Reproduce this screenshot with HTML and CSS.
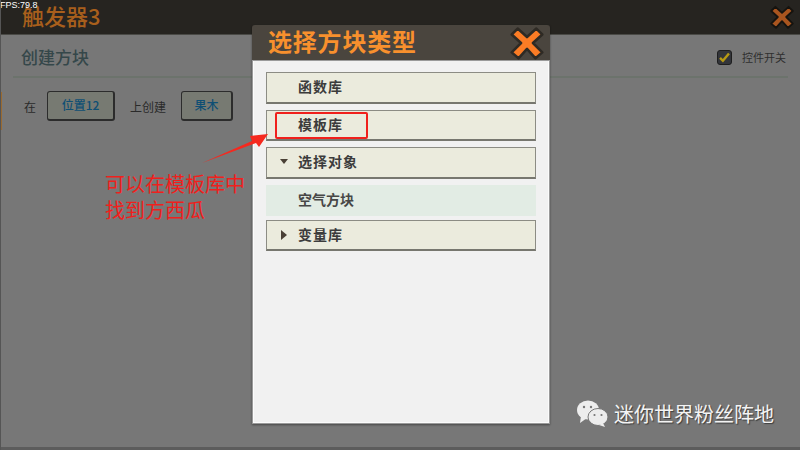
FILE: index.html
```html
<!DOCTYPE html>
<html lang="en">
<head>
  <meta charset="UTF-8" />
  <title>触发器3</title>
  <link rel="stylesheet" href="styles.css">
</head>
<body>

  <div class="screen">
    <div class="edge"></div>
    <div class="fps">FPS:79.8</div>

    <header class="topbar">
      <h1>触发器3</h1>
      <svg class="close close-dim" viewBox="0 0 40 40">
        <path d="M9 3 20 13 31 3 38 10 27 20 38 31 30 38 20 27 10 38 2 31 13 20 2 10z"/>
      </svg>
    </header>

    <main class="panel">
      <div class="panel-head">
        <h2>创建方块</h2>
        <div class="switch">
          <span class="checkbox">
            <svg viewBox="0 0 16 16"><path d="M2.5 8.5 6 12 13.5 3"/></svg>
          </span>
          <span>控件开关</span>
        </div>
      </div>
      <div class="create-row">
        <span>在</span>
        <button class="pick pick-pos">位置12</button>
        <span class="after">上创建</span>
        <button class="pick pick-tree">果木</button>
      </div>
    </main>

    <div class="footer-line"></div>

    <section class="modal">
      <div class="modal-head">
        <h2>选择方块类型</h2>
        <svg class="close" viewBox="0 0 40 40">
          <path d="M9 3 20 13 31 3 38 10 27 20 38 31 30 38 20 27 10 38 2 31 13 20 2 10z"/>
        </svg>
      </div>
      <div class="modal-body">
        <div class="item">函数库</div>
        <div class="item">模板库</div>
        <div class="item"><i class="arrow arrow-down"></i>选择对象</div>
        <div class="sub-item">空气方块</div>
        <div class="item"><i class="arrow arrow-right"></i>变量库</div>
      </div>
    </section>

    <!-- annotation drawn on top of the screenshot -->
    <div class="mark"></div>
    <svg class="pointer" viewBox="0 0 70 50">
      <path d="M0 30 50 8 48 3 66 1 57 14 54 10z"/>
    </svg>
    <div class="note">可以在模板库中<br>找到方西瓜</div>

    <div class="watermark">
      <svg viewBox="0 0 32 28">
        <ellipse cx="12" cy="10" rx="11" ry="9.5"/>
        <path d="M5 16 4 23 11 18z"/>
        <ellipse cx="22" cy="17" rx="10" ry="8.5" class="front"/>
        <path d="M27 23 29 27 23 25z"/>
        <circle cx="8" cy="7" r="1.2" class="eye"/>
        <circle cx="15" cy="7" r="1.2" class="eye"/>
        <circle cx="18.500" cy="15" r="1.1" class="eye"/>
        <circle cx="25.500" cy="15" r="1.1" class="eye"/>
      </svg>
      <span>迷你世界粉丝阵地</span>
    </div>
  </div>

</body>
</html>
```

FILE: styles.css
```css
* {
  box-sizing: border-box;
}

body {
  margin: 0;
  background: #777777;
  font-family: "Noto Sans CJK SC", "Liberation Sans", sans-serif;
}

h1, h2 {
  margin: 0;
}

.screen {
  position: relative;
  width: 800px;
  height: 450px;
  overflow: hidden;
  display: flex;
  flex-direction: column;
  background: #777777;
  border-left: 1px solid #555;
}

.edge {
  position: absolute;
  top: 92px;
  left: -1px;
  width: 2px;
  height: 38px;
  background: #9a6a30;
}

.fps {
  position: absolute;
  top: 0;
  left: -1px;
  font: 9px/10px "Liberation Sans", sans-serif;
  color: #fff;
}

.topbar {
  height: 35px;
  flex: none;
  display: flex;
  align-items: center;
  justify-content: space-between;
  padding: 0 6px 0 21px;
  background: #262420;
  border-bottom: 1px solid #4a4a46;
}

.topbar h1 {
  font-size: 22px;
  font-weight: 500;
  line-height: 31px;
  padding-bottom: 3px;
  color: #a85f1c;
}

.close {
  width: 34px;
  height: 34px;
  fill: #fb7c25;
  stroke: #2e2a24;
  stroke-width: 3;
  stroke-linejoin: round;
}

.close-dim {
  width: 24px;
  height: 24px;
  fill: #a9551f;
  stroke: #15130f;
}

.panel {
  flex: 1;
  padding: 0 12px;
}

.panel-head {
  height: 43px;
  display: flex;
  align-items: center;
  justify-content: space-between;
  padding: 2px 2px 0 8px;
  border-bottom: 2px solid #6c736c;
}

.panel-head h2 {
  font-size: 17px;
  font-weight: 500;
  color: #35474a;
}

.switch {
  display: flex;
  align-items: center;
  gap: 10px;
  font-size: 11px;
  color: #2f2f2f;
}

.checkbox {
  width: 15px;
  height: 15px;
  margin-top: 2px;
  border-radius: 3px;
  background: #33353a;
  border: 1px solid #1e1e1e;
}

.checkbox svg {
  display: block;
  fill: none;
  stroke: #b79a13;
  stroke-width: 3;
}

.create-row {
  display: flex;
  align-items: center;
  padding: 13px 0 0 11px;
  font-size: 12px;
  color: #2a2a2a;
}

.pick {
  height: 30px;
  margin-left: 11px;
  padding: 0 0 2px;
  border: 1px solid #2c2c2c;
  border-bottom-width: 2px;
  border-right-width: 2px;
  border-radius: 3px;
  background: #777a72;
  font: 500 12px "Noto Sans CJK SC", sans-serif;
  color: #0f4f74;
}

.pick-pos {
  width: 68px;
}

.pick-tree {
  width: 52px;
  margin-left: 15px;
}

.after {
  margin-left: 15px;
}

.footer-line {
  height: 3px;
  flex: none;
  background: #5c5c5c;
}

.modal {
  position: absolute;
  top: 25px;
  left: 251px;
  width: 298px;
  height: 399px;
  display: flex;
  flex-direction: column;
  box-shadow: 0 1px 2px rgba(0,0,0,0.4);
}

.modal-head {
  height: 35px;
  flex: none;
  display: flex;
  align-items: center;
  justify-content: space-between;
  padding: 0 6px 0 16px;
  background: #4a453e;
  border-radius: 3px 3px 0 0;
}

.modal-head h2 {
  font-size: 24px;
  font-weight: 700;
  line-height: 31px;
  letter-spacing: 0.8px;
  padding-bottom: 4px;
  color: #f8902d;
}

.modal-body {
  flex: 1;
  display: flex;
  flex-direction: column;
  gap: 6px;
  padding: 12px 12px;
  background: #f1f1f1;
  border: 2px solid #fbfbfb;
  border-top: 0;
  outline: 1px solid #9a9a9a;
  outline-offset: -1px;
}

.item {
  height: 31.5px;
  display: flex;
  align-items: center;
  padding: 0 0 2px 31px;
  position: relative;
  background: #ebebdd;
  border: 1px solid #8c8c84;
  border-bottom: 2px solid #77776f;
  font-size: 14px;
  font-weight: 700;
  letter-spacing: 1px;
  color: #3c3c3c;
}

.sub-item {
  height: 31px;
  display: flex;
  align-items: center;
  padding: 0 0 3px 32px;
  margin: 0 0 -2px;
  background: #e2ece4;
  font-size: 14px;
  font-weight: 700;
  color: #474747;
}

.arrow {
  position: absolute;
  left: 13px;
  top: 50%;
  width: 0;
  height: 0;
  border-style: solid;
  border-color: transparent;
}

.arrow-down {
  margin-top: -3px;
  border-width: 5px 4px 0;
  border-top-color: #4a4036;
}

.arrow-right {
  left: 14px;
  margin-top: -5px;
  border-width: 5px 0 5px 6px;
  border-left-color: #4a4036;
}

.mark {
  position: absolute;
  top: 112px;
  left: 274px;
  width: 93px;
  height: 27px;
  border: 2px solid #f0201c;
  border-radius: 2px;
}

.pointer {
  position: absolute;
  top: 133px;
  left: 201px;
  width: 70px;
  height: 50px;
  fill: #f5291f;
}

.note {
  position: absolute;
  top: 171px;
  left: 104px;
  font-size: 20px;
  line-height: 26px;
  color: #f0201c;
}

.watermark {
  position: absolute;
  top: 399px;
  left: 575px;
  display: flex;
  align-items: center;
  gap: 6px;
  font-size: 20px;
  line-height: 30px;
  color: #f4f4f4;
  text-shadow: 1px 1px 1px rgba(0,0,0,0.5);
}

.watermark svg {
  width: 32px;
  height: 28px;
  fill: #ededed;
}

.watermark .front {
  stroke: #777777;
  stroke-width: 1;
}

.watermark .eye {
  fill: #777777;
}
```
